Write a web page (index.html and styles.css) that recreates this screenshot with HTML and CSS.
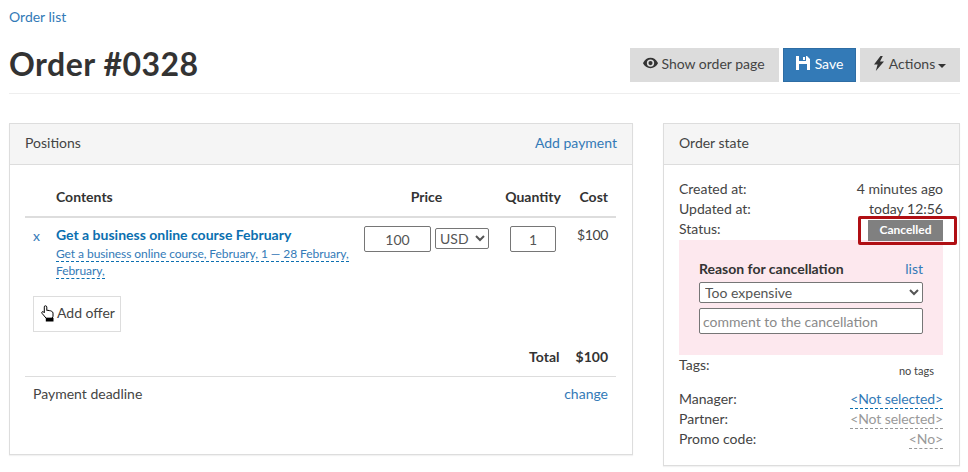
FILE: index.html
```html
<!DOCTYPE html>
<html lang="en">
<head>
<meta charset="utf-8">
<title>Order #0328</title>
<link rel="stylesheet" href="styles.css">
</head>
<body>
<div class="page">
  <a class="crumb" href="#">Order list</a>
  <header class="head">
    <h1>Order #0328</h1>
    <div class="actions">
      <a class="btn btn-show" href="#"><svg class="ico-eye" viewBox="0 0 16 12"><path fill="#333" fill-rule="evenodd" d="M8 .5C4.6.5 1.8 2.6.2 5.800L0 6.200c1.500 3.200 4.500 5.300 8 5.300s6.500-2.100 8-5.300l-.2-.4C14.200 2.600 11.400.5 8 .5zM8 2.200a3.900 3.900 0 1 1 0 7.800 3.900 3.900 0 0 1 0-7.800zM8 3.900a2.200 2.200 0 1 0 0 4.400 2.200 2.200 0 0 0 0-4.400z"/></svg><span class="btn-text">Show order page</span></a>
      <a class="btn btn-save" href="#"><svg class="ico-save" viewBox="0 0 14 14"><path fill="#fff" fill-rule="evenodd" d="M0 0h11l3 3v11H0zM3 0v5h7V0zM7 1h2v3H7zM3 8v6h8V8z"/></svg><span class="btn-text">Save</span></a>
      <a class="btn btn-act" href="#"><svg class="ico-bolt" viewBox="0 0 10 15"><path fill="#333" d="M6.500 0 0 8.500h3.600L1.800 15 10 5.500H6L8.800 0z"/></svg><span class="btn-text">Actions</span><span class="caret"></span></a>
    </div>
  </header>

  <div class="columns">
    <section class="panel panel-main">
      <div class="panel-head"><span>Positions</span><a href="#">Add payment</a></div>
      <div class="panel-body">
        <table class="positions">
          <thead>
            <tr>
              <th class="c-x"></th>
              <th class="c-contents">Contents</th>
              <th class="c-price">Price</th>
              <th class="c-qty">Quantity</th>
              <th class="c-cost">Cost</th>
            </tr>
          </thead>
          <tbody>
            <tr>
              <td class="c-x"><a class="remove" href="#">x</a></td>
              <td class="c-contents">
                <a class="item-title" href="#">Get a business online course February</a>
                <a class="item-sub" href="#"><span>Get a business online course, February, 1 — 28 February, February,</span></a>
              </td>
              <td class="c-price"><div class="price-ctl"><input class="inp inp-price" value="100"><select class="sel sel-cur"><option>USD</option></select></div></td>
              <td class="c-qty"><input class="inp inp-qty" value="1"></td>
              <td class="c-cost"><span class="cost-val">$100</span></td>
            </tr>
          </tbody>
        </table>
        <button class="add-offer" type="button"><svg class="ico-hand" viewBox="0 0 14 17"><path fill="#fff" stroke="#000" stroke-width="1" stroke-linejoin="round" d="M4.500.8c.8 0 1.300.6 1.300 1.300v3.400l1-.2 1.500.3 1.300.2 1.200.6c.8.4 1.200.9 1.200 1.700v3.200l-.9 2H5.200L1 8.300c-.4-.6-.3-1.200.2-1.500.5-.4 1.100-.2 1.500.2l.6.7V2.100c0-.7.200-1.300.7-1.300z"/><path fill="#000" d="M4.800 12.800h7.700V16.500H4.800z"/></svg><span class="add-text">Add offer</span></button>
        <div class="total"><b>Total</b><b class="total-sum">$100</b></div>
        <div class="deadline"><span>Payment deadline</span><a href="#">change</a></div>
      </div>
    </section>

    <aside class="panel panel-side">
      <div class="panel-head"><span>Order state</span></div>
      <div class="panel-body side-body">
        <div class="row"><span>Created at:</span><span>4 minutes ago</span></div>
        <div class="row"><span>Updated at:</span><span>today 12:56</span></div>
        <div class="row row-status"><span>Status:</span><span class="badge">Cancelled</span><span class="highlight"></span></div>
        <div class="reason">
          <div class="reason-head"><b>Reason for cancellation</b><a href="#">list</a></div>
          <select class="sel sel-reason"><option>Too expensive</option></select>
          <input class="inp inp-comment" placeholder="comment to the cancellation">
        </div>
        <div class="tags"><span>Tags:</span><span class="no-tags">no tags</span></div>
        <div class="row"><span>Manager:</span><a class="dash" href="#">&lt;Not selected&gt;</a></div>
        <div class="row"><span>Partner:</span><a class="dash muted" href="#">&lt;Not selected&gt;</a></div>
        <div class="row"><span>Promo code:</span><a class="dash muted" href="#">&lt;No&gt;</a></div>
      </div>
    </aside>
  </div>
</div>
</body>
</html>
```
FILE: styles.css
```css
* { box-sizing: border-box; }
html, body { margin: 0; padding: 0; }
body {
  width: 968px;
  height: 472px;
  overflow: hidden;
  background: #fff;
  color: #444;
  font: 14px/20px Lato, "Liberation Sans", sans-serif;
}
a { color: #337ab7; text-decoration: none; }
.page { width: 951px; margin-left: 9px; padding-top: 7px; }
.crumb { display: block; height: 21px; }

.head {
  display: flex;
  justify-content: space-between;
  align-items: flex-start;
  height: 66px;
  border-bottom: 1px solid #eee;
}
h1 { margin: 14px 0 0; font-size: 32px; line-height: 44px; font-weight: 700; letter-spacing: .5px; color: #333; }
.actions { display: flex; gap: 4px; margin-top: 20px; }
.btn {
  display: flex;
  align-items: center;
  justify-content: center;
  height: 34px;
  background: #dcdcdc;
  color: #444;
  font-size: 14px;
}
.btn-text { margin-top: -2px; }
.btn-show { width: 149px; }
.btn-save { width: 73px; background: #337ab7; border: 1px solid #2e6da4; color: #fff; }
.btn-act { width: 100px; }
.ico-eye { width: 15px; height: 12px; margin: -5px 3px 0 -1px; }
.ico-save { width: 14px; height: 14px; margin: -4px 5px 0 0; }
.ico-bolt { width: 10px; height: 15px; margin: -3px 5px 0 0; }
.caret {
  width: 0; height: 0;
  margin: 2px 0 0 3px;
  border-top: 4px solid #333;
  border-left: 4px solid transparent;
  border-right: 4px solid transparent;
}

.columns { display: flex; align-items: flex-start; gap: 30px; margin-top: 29px; }
.panel { background: #fff; border: 1px solid #ddd; box-shadow: 0 1px 1px rgba(0,0,0,.05); }
.panel-main { width: 624px; height: 332px; }
.panel-side { width: 297px; height: 343px; }
.panel-head {
  display: flex;
  justify-content: space-between;
  height: 41px;
  padding: 9px 15px 11px;
  background: #f5f5f5;
  border-bottom: 1px solid #ddd;
}
.panel-main .panel-body { padding: 15px 16px 0 15px; }

.positions { width: 591px; border-collapse: collapse; table-layout: fixed; }
.positions th { height: 37px; padding: 0 8px 2px; border-bottom: 2px solid #ddd; font-weight: 700; vertical-align: middle; color: #333; }
.positions td { padding: 8px; vertical-align: top; }
.c-x { width: 23px; }
.c-contents { width: 308px; text-align: left; }
.c-price { width: 141px; text-align: center; }
.c-qty { width: 72px; text-align: center; }
.c-cost { width: 47px; text-align: right; }
.cost-val { display: block; margin-top: -1px; letter-spacing: -.4px; }
.item-title { display: block; margin-top: -1px; color: #0b6fb0; font-weight: 700; line-height: 20px; }
.item-sub { display: block; font-size: 12px; line-height: 17px; width: 298px; letter-spacing: -.07px; }
.item-sub span { border-bottom: 1px dashed #0b6fb0; }
.remove { line-height: 20px; }
.price-ctl { display: flex; align-items: flex-start; gap: 4px; }
.inp { font: inherit; color: #555; border: 1px solid #767676; border-radius: 2px; background: #fff; text-align: center; padding: 0; outline: none; }
.inp-price { width: 67px; height: 26px; }
.inp-qty { width: 46px; height: 26px; }
.sel { font: inherit; color: #555; border: 1px solid #767676; border-radius: 2px; background: #fff; }
.sel-cur { width: 54px; height: 21px; margin-top: 2px; padding: 0; }

.add-offer {
  display: flex;
  align-items: center;
  width: 88px;
  height: 36px;
  margin: 9px 0 0 8px;
  padding: 0 0 0 7px;
  background: #fff;
  border: 1px solid #ddd;
  color: #444;
  font: inherit;
}
.add-text { margin-top: -2px; }
.ico-hand { width: 14px; height: 17px; margin: -2px 2px 0 0; }
.total { display: flex; justify-content: flex-end; gap: 16px; margin-top: 15px; padding-right: 8px; height: 29px; color: #333; }
.deadline { display: flex; justify-content: space-between; height: 36px; padding: 7px 8px 0; border-top: 1px solid #ddd; }

.side-body { padding: 14px 16px 0 15px; }
.row { display: flex; justify-content: space-between; height: 20px; }
.row-status { position: relative; }
.badge {
  width: 75px;
  height: 21px;
  margin-top: 1px;
  background: #808080;
  color: #fff;
  font-size: 12px;
  font-weight: 700;
  line-height: 20px;
  text-align: center;
}
.highlight { position: absolute; right: -14px; top: -3px; width: 99px; height: 29px; border: 3px solid #b00f14; border-radius: 2px; }
.reason { width: 264px; height: 115px; margin-top: 1px; padding: 19px 20px 0; background: #fde8ee; }
.reason-head { display: flex; justify-content: space-between; height: 20px; margin-bottom: 3px; color: #333; }
.sel-reason { display: block; width: 224px; height: 21px; padding: 0 0 0 1px; }
.inp-comment { display: block; width: 224px; height: 26px; margin-top: 5px; padding: 0 3px; text-align: left; }
.inp-comment::placeholder { color: #8a8a8a; opacity: 1; }
.tags { display: flex; justify-content: space-between; height: 34px; }
.no-tags { margin: 6px 9px 0 0; font-size: 11px; }
.dash { border-bottom: 1px dashed #0b6fb0; height: 20px; letter-spacing: -.1px; }
.muted { color: #999; border-bottom-color: #999; }
```
